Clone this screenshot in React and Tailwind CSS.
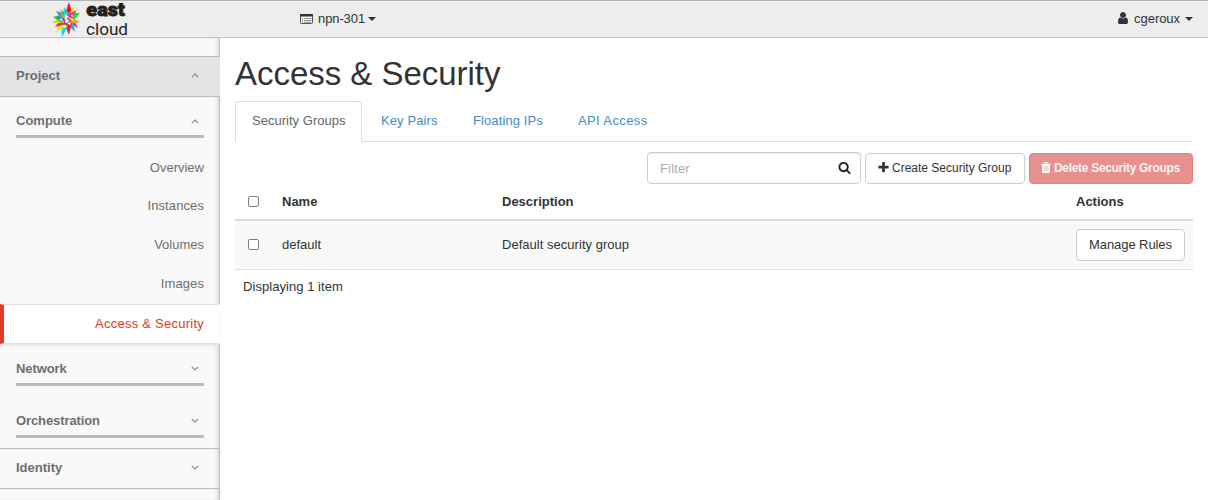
import React from "react";

const PATHS = {
  search:
    "M1216 832q0-185-131.5-316.5t-316.5-131.5-316.5 131.5-131.5 316.5 131.5 316.5 316.5 131.5 316.5-131.5 131.5-316.5zm512 832q0 52-38 90t-90 38q-54 0-90-38l-343-342q-179 124-399 124-143 0-273.5-55.5t-225-150-150-225-55.5-273.5 55.5-273.5 150-225 225-150 273.5-55.5 273.5 55.5 225 150 150 225 55.5 273.5q0 220-124 399l343 343q37 37 37 90z",
  plus:
    "M1600 736v192q0 40-28 68t-68 28h-416v416q0 40-28 68t-68 28h-192q-40 0-68-28t-28-68v-416h-416q-40 0-68-28t-28-68v-192q0-40 28-68t68-28h416v-416q0-40 28-68t68-28h192q40 0 68 28t28 68v416h416q40 0 68 28t28 68z",
  user:
    "M1536 1399q0 109-62.5 187t-150.5 78h-854q-88 0-150.5-78t-62.5-187q0-85 8.5-160.5t31.5-152 58.5-131 94-89 134.5-34.5q131 128 313 128t313-128q76 0 134.5 34.5t94 89 58.5 131 31.5 152 8.5 160.5zm-256-887q0 159-112.5 271.5t-271.5 112.5-271.5-112.5-112.5-271.5 112.5-271.5 271.5-112.5 271.5 112.5 112.5 271.5z",
};

function Icon({ name, className }) {
  return (
    <svg viewBox="0 0 1792 1792" fill="currentColor" className={className}>
      <path d={PATHS[name]} />
    </svg>
  );
}

function ListIcon() {
  return (
    <svg viewBox="0 0 14 12" className="mr-[4px] mb-px h-3 w-3.5 shrink-0">
      <rect x="0.5" y="1.5" width="12" height="9" rx="0.8" fill="#f4f4f4" stroke="#555" />
      <rect x="0" y="1" width="13" height="2.4" rx="0.8" fill="#333" />
      <path d="M2 5.5h1M4 5.5h7M2 7.5h1M4 7.5h7M2 9.3h1M4 9.3h7" stroke="#777" strokeWidth="0.8" />
    </svg>
  );
}

function TrashIcon() {
  return (
    <svg viewBox="0 0 10 11" className="mr-[3px] h-[11px] w-[10px] shrink-0">
      <path d="M3.2 1.8V.6h3.6v1.2" fill="none" stroke="#fff" />
      <path d="M.3 1.7h9.4V3H.3zM1 3h8v7.2q0 .8-.8.8H1.8q-.8 0-.8-.8z" fill="#fff" />
      <path d="M3.2 4.2v5.2M5 4.2v5.2M6.8 4.2v5.2" stroke="#e8908e" strokeWidth="0.6" />
    </svg>
  );
}

const SPIKES = [
  ["#f01423", 17, 0, 13, 12, 20, 10],
  ["#e8e010", 22, 4, 16, 14, 22, 14],
  ["#20d830", 28, 11, 18, 11, 20, 20],
  ["#e020e0", 26, 26, 16, 20, 20, 14],
  ["#18b8f0", 23, 30, 14, 21, 21, 18],
  ["#f02030", 17, 33, 12, 21, 20, 21],
  ["#10d8f0", 10, 35, 9, 20, 16, 24],
  ["#f0e020", 4, 30, 9, 18, 15, 24],
  ["#f03040", 3, 25, 11, 14, 14, 22],
  ["#e0d010", 0, 21, 10, 14, 12, 21],
  ["#10c850", 1, 15, 12, 12, 10, 21],
  ["#30a0f0", 4, 9, 15, 12, 10, 19],
  ["#f0a020", 8, 7, 16, 12, 11, 17],
  ["#18d8d0", 12, 5, 18, 13, 11, 15],
  ["#f020a0", 25, 8, 19, 17, 15, 13],
  ["#f0a010", 28, 20, 17, 22, 18, 15],
];

const SPECKS = [
  ["#fff", 14, 14], ["#e11b80", 16, 17], ["#2058e8", 12, 18], ["#f03030", 18, 19],
  ["#fff", 17, 22], ["#20c040", 11, 12], ["#ffe820", 20, 14], ["#d020e0", 10, 22],
  ["#fff", 9, 18], ["#f02060", 13, 22], ["#20a0e8", 20, 22], ["#fff", 20, 18],
  ["#20d840", 23, 12], ["#f02090", 7, 16], ["#fff", 12, 25], ["#c020e0", 17, 11],
];

function Logo() {
  return (
    <svg viewBox="0 0 80 37" className="h-[37px] w-20 shrink-0">
      <g transform="translate(0 1)">
        {SPIKES.map(([c, x, y, a, b, d, e]) => (
          <polygon key={c + x + y} fill={c} points={`${x},${y} ${a},${b} ${d},${e}`} />
        ))}
        {SPECKS.map(([c, x, y]) => (
          <polygon key={`${x}-${y}`} fill={c} points={`${x - 1.5},${y} ${x},${y - 2} ${x + 1.8},${y + 1}`} />
        ))}
      </g>
      <text
        x="34.3" y="15.1" fontFamily="Roboto, sans-serif" fontWeight="900" fontSize="17.5"
        textLength="38.5" lengthAdjust="spacingAndGlyphs" fill="#231f20" stroke="#231f20" strokeWidth="0.8"
      >
        east
      </text>
      <text
        x="34" y="33.5" fontFamily="Roboto, sans-serif" fontSize="17"
        textLength="42" lengthAdjust="spacingAndGlyphs" fill="#231f20"
      >
        cloud
      </text>
    </svg>
  );
}

function Caret() {
  return (
    <svg viewBox="0 0 8 4" className="mb-px h-1 w-2 shrink-0" fill="#333">
      <path d="M0 0h8L4 4z" />
    </svg>
  );
}

function Chevron({ open }) {
  return (
    <svg viewBox="0 0 8 5" className="h-[5px] w-2" fill="none" stroke="#888" strokeWidth="1.2">
      <path d={open ? "M.8 4.2 4 1l3.2 3.2" : "M.8.8 4 4 7.2.8"} />
    </svg>
  );
}

function Heading({ label, open, className }) {
  return (
    <div className={`flex items-center justify-between font-bold ${className}`}>
      <span>{label}</span>
      <span className="mr-[5px]"><Chevron open={open} /></span>
    </div>
  );
}

function Checkbox() {
  return <span className="block h-[11px] w-[11px] rounded-[2px] border border-[#808080] bg-white" />;
}

export default function App() {
  return (
    <div className="flex h-[500px] w-[1208px] flex-col overflow-hidden bg-white font-['Liberation_Sans',Arial,sans-serif] text-[13px] leading-[18px] text-[#333]">
      <header className="flex h-[38px] shrink-0 items-center border-y border-t-[#b3b3b3] border-b-[#c4c4c4] bg-[#ededed]">
        <div className="w-[300px] pl-[52px]"><Logo /></div>
        <div className="flex flex-1 items-center">
          <ListIcon />
          <span className="mr-[3px] tracking-[-0.1px]">npn-301</span>
          <Caret />
        </div>
        <div className="flex items-center pr-[15px]">
          <Icon name="user" className="mr-[4px] mb-[2px] h-[14px] w-[14px]" />
          <span className="mr-[5px] tracking-[-0.05px]">cgeroux</span>
          <Caret />
        </div>
      </header>

      <div className="flex min-h-0 flex-1">
        <aside className="flex w-[220px] shrink-0 flex-col bg-[#f9f9f9] text-[#6e6e6e]">
          <div className="h-[18px] border-r border-[#bbb] shadow-[inset_-4px_0_4px_-2px_#dedede]" />
          <Heading label="Project" open className="h-[41px] border-y border-[#bbb] bg-[#e2e4e5] pr-4 pl-4 pb-[2px]" />
          <div className="flex h-[207px] flex-col border-r border-[#bbb] pr-[15px] pl-4 shadow-[inset_-4px_0_4px_-2px_#dedede]">
            <Heading label="Compute" open className="h-[41px] border-b-3 border-[#bbb] pt-[10px]" />
            <nav className="flex flex-col items-end pt-[21px]">
              <span className="h-[38px]">Overview</span>
              <span className="h-[39px] tracking-[0.1px]">Instances</span>
              <span className="h-[39px]">Volumes</span>
              <span className="tracking-[0.1px]">Images</span>
            </nav>
          </div>
          <div className="flex h-10 shrink-0 items-center justify-end border-y border-l-4 border-y-[#e2e2e2] border-l-[#df3c27] bg-white pr-4 text-[#df3c27] shadow-[0_2px_3px_-1px_#ddd]">
            <span className="tracking-[0.25px]">Access &amp; Security</span>
          </div>
          <div className="flex h-[105px] shrink-0 flex-col border-r border-b border-[#bbb] pt-[1px] pr-[15px] pl-4 shadow-[inset_-4px_0_4px_-2px_#dedede]">
            <Heading label="Network" className="h-[41px] border-b-3 border-[#bbb] pt-[9px] tracking-[-0.1px]" />
            <Heading label="Orchestration" className="mt-[11px] h-[41px] border-b-3 border-[#bbb] pt-[9px] tracking-[-0.1px]" />
          </div>
          <Heading label="Identity" className="h-[40px] border-r border-b border-[#bbb] pr-[15px] pb-[2px] pl-4 shadow-[inset_-4px_0_4px_-2px_#dedede]" />
          <div className="flex-1 border-r border-[#bbb] shadow-[inset_-4px_0_4px_-2px_#dedede]" />
        </aside>

        <main className="flex-1 pr-[15px] pl-[15px]">
          <h1 className="h-[63px] pt-[18px] text-[33px] leading-9 tracking-[-0.03px]">Access &amp; Security</h1>
          <div className="flex h-[41px] border-b border-[#ddd] text-[#428bca]">
            <div className="h-[41px] w-[127px] rounded-t-[4px] border border-b-0 border-[#ddd] bg-white pt-[10px] pl-4 tracking-[0.02px] text-[#666]">
              Security Groups
            </div>
            <span className="w-[92px] pt-[11px] pl-[19px] tracking-[0.1px]">Key Pairs</span>
            <span className="w-[105px] pt-[11px] pl-[19px] tracking-[0.1px]">Floating IPs</span>
            <span className="pt-[11px] pl-[19px] tracking-[0.38px]">API Access</span>
          </div>

          <div className="mt-[10px] flex items-end justify-end gap-1 text-xs">
            <div className="flex h-8 w-[214px] items-center justify-between rounded-[4px] border border-[#ccc] pr-[9px] pl-3 text-[13px] text-[#aaa] shadow-[inset_0_1px_1px_rgba(0,0,0,0.075)]">
              <span className="pt-px tracking-[0.15px]">Filter</span>
              <Icon name="search" className="mb-px h-[13px] w-[13px] text-[#222]" />
            </div>
            <button className="flex h-[31px] w-[160px] items-center rounded-[4px] border border-[#ccc] bg-white pb-[2px] pl-[11px] whitespace-nowrap">
              <Icon name="plus" className="mr-[2px] h-[13px] w-[13px]" />
              <span>Create Security Group</span>
            </button>
            <button className="flex h-[31px] w-[164px] items-center rounded-[4px] border border-[#e38380] bg-[#e8908e] pb-[2px] pl-[11px] font-bold tracking-[-0.31px] whitespace-nowrap text-white">
              <TrashIcon />
              <span className="opacity-90">Delete Security Groups</span>
            </button>
          </div>

          <div className="grid h-[37px] grid-cols-[47px_220px_1fr_117px] items-center border-b-2 border-[#ddd] font-bold">
            <span className="pl-[13px]"><Checkbox /></span>
            <span>Name</span>
            <span>Description</span>
            <span>Actions</span>
          </div>
          <div className="grid h-[49px] grid-cols-[47px_220px_1fr_117px] items-center border-b border-[#ddd] bg-[#f9f9f9]">
            <span className="pb-px pl-[13px]"><Checkbox /></span>
            <span>default</span>
            <span className="tracking-[0.03px]">Default security group</span>
            <button className="h-8 w-[109px] rounded-[4px] border border-[#ccc] bg-white tracking-[-0.08px]">Manage Rules</button>
          </div>
          <p className="pt-2 pl-2 tracking-[0.05px]">Displaying 1 item</p>
        </main>
      </div>
    </div>
  );
}
